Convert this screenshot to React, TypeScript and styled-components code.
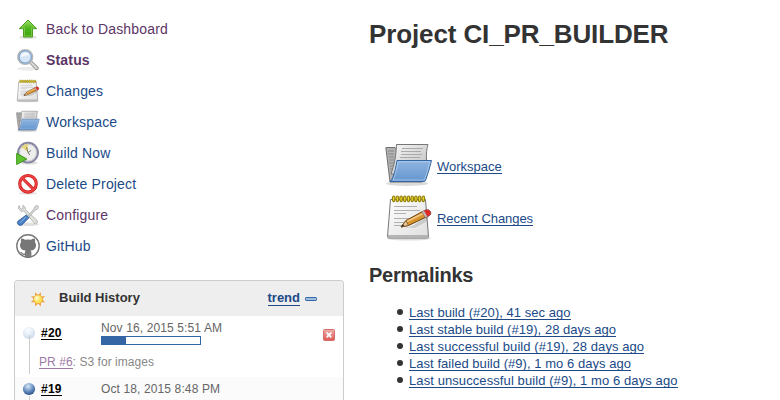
import React from 'react';
import styled, { createGlobalStyle } from 'styled-components';

const GlobalStyle = createGlobalStyle`
  * { box-sizing: border-box; }
  body {
    margin: 0;
    background: #fff;
    color: #333;
    font-family: "Liberation Sans", Arial, Helvetica, sans-serif;
    font-size: 13px;
    overflow: hidden;
  }
`;

const Page = styled.div`
  display: flex;
  width: 780px;
  height: 400px;
  overflow: hidden;
`;

const SidePanel = styled.aside`
  width: 344px;
  flex: none;
  padding: 13px 0 0 14px;
`;

const TaskList = styled.nav`
  display: flex;
  flex-direction: column;
  height: 267px;
`;

const Task = styled.a<{ $visited?: boolean; $current?: boolean }>`
  display: flex;
  align-items: center;
  gap: 6px;
  height: 31px;
  padding-left: 2px;
  font-size: 14px;
  white-space: nowrap;
  letter-spacing: 0.17px;
  font-weight: ${(p) => (p.$current ? 'bold' : 'normal')};
  color: ${(p) => (p.$visited ? '#5c3566' : '#204a87')};
  svg { flex: none; overflow: visible; }
`;

const History = styled.section`
  width: 330px;
  height: 140px;
  border: 1px solid #ccc;
  border-bottom: 0;
  border-radius: 4px 4px 0 0;
  overflow: hidden;
`;

const HistoryHeader = styled.header`
  display: flex;
  align-items: center;
  height: 35px;
  padding: 0 26px 0 15px;
  background: #eee;
  font-weight: bold;
  svg { display: block; flex: none; }
`;

const HistoryTitle = styled.span`
  flex: 1;
  margin: -2px 0 0 13px;
`;

const Trend = styled.a`
  color: #204a87;
  line-height: 14px;
  border-bottom: 1px solid #204a87;
  margin-right: 5px;
`;

const Build = styled.div<{ $shade?: boolean; $height: number }>`
  display: grid;
  grid-template-columns: 26px 60px 1fr 28px;
  grid-template-rows: 36px 1fr;
  height: ${(p) => p.$height}px;
  background: ${(p) => (p.$shade ? '#fbfbfb' : '#fff')};
  font-size: 12px;
  color: #666;
`;

const Timeline = styled.div`
  grid-row: 1 / 3;
  svg { display: block; }
`;

const BuildNumber = styled.a<{ $top: number }>`
  justify-self: start;
  align-self: start;
  margin-top: ${(p) => p.$top}px;
  height: 14px;
  line-height: 14px;
  font-weight: bold;
  letter-spacing: 0.25px;
  color: #000;
  border-bottom: 1px solid #000;
`;

const BuildDate = styled.div<{ $top: number }>`
  padding-top: ${(p) => p.$top}px;
  line-height: 14px;
  letter-spacing: 0.12px;
`;

const Progress = styled.div`
  width: 100px;
  height: 9px;
  margin-top: 1px;
  border: 1px solid #3465a4;
`;

const ProgressDone = styled.div`
  height: 100%;
  background: #3465a4;
`;

const StopButton = styled.a`
  padding-top: 13px;
  padding-left: 8px;
  svg { display: block; }
`;

const Description = styled.div`
  grid-column: 2 / 5;
  padding: 3px 0 0 0;
  margin-left: -2px;
  line-height: 14px;
  letter-spacing: 0.05px;
  color: #888;
`;

const PullLink = styled.a`
  display: inline-block;
  height: 14px;
  color: #9b7ba6;
  border-bottom: 1px solid #9b7ba6;
`;

const Main = styled.main`
  flex: 1;
  padding: 18px 0 0 25px;
  white-space: nowrap;
`;

const Title = styled.h1`
  margin: 0;
  height: 122px;
  font-size: 26px;
  line-height: 32px;
  letter-spacing: -0.12px;
`;

const Summary = styled.div`
  display: flex;
  align-items: center;
  height: 52px;
  padding-left: 16px;
  gap: 4px;
  svg { flex: none; }
`;

const Link = styled.a<{ $spacing?: number }>`
  display: inline-block;
  height: 15px;
  line-height: 15px;
  color: #204a87;
  border-bottom: 1px solid #204a87;
  letter-spacing: ${(p) => p.$spacing ?? 0}px;
`;

const SubTitle = styled.h2`
  margin: 19px 0 18px;
  font-size: 20px;
  line-height: 24px;
  letter-spacing: -0.25px;
`;

const Permalinks = styled.ul`
  margin: 0;
  padding: 0;
  list-style: none;
`;

const Permalink = styled.li`
  display: flex;
  align-items: flex-start;
  height: 17px;
  padding-left: 28px;
  &::before {
    content: '';
    width: 6px;
    height: 6px;
    margin: 4px 6px 0 0;
    border-radius: 50%;
    background: #333;
  }
`;

const UpIcon = () => (
  <svg width="24" height="24" viewBox="0 0 24 24">
    <defs>
      <linearGradient id="up" x2="0" y2="1"><stop stopColor="#97dc63" /><stop offset=".5" stopColor="#4db51b" /><stop offset="1" stopColor="#42a50f" /></linearGradient>
    </defs>
    <ellipse cx="12" cy="20.3" rx="9" ry="1.8" fill="#000" opacity=".12" />
    <path d="M12 3 20.6 11.7H16.5V20H7.5V11.7H3.4Z" fill="url(#up)" stroke="#4c9c1d" strokeLinejoin="round" />
    <path d="M12 4.5 18.5 10.9H15.5V19H8.5V10.9H5.5Z" fill="none" stroke="#b7ec8b" strokeWidth=".6" opacity=".7" />
  </svg>
);

const SearchIcon = () => (
  <svg width="24" height="24" viewBox="0 0 24 24">
    <ellipse cx="12" cy="20.7" rx="11" ry="2" fill="#000" opacity=".08" />
    <path d="m15 14.5 5.7 5.7" stroke="#858783" strokeWidth="3.8" strokeLinecap="round" />
    <path d="m15 14.5 5.6 5.6" stroke="#d8dad6" strokeWidth="2.2" strokeLinecap="round" />
    <circle cx="9.2" cy="9" r="7.3" fill="#d5e5f6" stroke="#b4b6b6" strokeWidth="1.6" />
    <circle cx="9.2" cy="9" r="6.1" fill="none" stroke="#6a96cc" strokeWidth="1" />
    <path d="M4.6 9.5C5 3.5 12 3 13.8 7.4 10 7 8 8 4.6 9.5Z" fill="#fff" opacity=".75" />
  </svg>
);

const NotepadIcon = ({ size }: { size: number }) => (
  <svg width={size} height={size} viewBox="0 0 48 48">
    <defs>
      <linearGradient id="pad" x2="1" y2="1"><stop stopColor="#fff" /><stop offset="1" stopColor="#dedede" /></linearGradient>
    </defs>
    <ellipse cx="24" cy="44.3" rx="22" ry="2.3" fill="#000" opacity=".13" />
    <path d="M5.5 5.5H40.5L43.5 42.5Q43.5 44 42 44H4Q2.5 44 2.5 42.5Z" fill="url(#pad)" stroke="#777" />
    <path d="M3 41H43V43.5H3Z" fill="#b5b5b5" />
    {[12, 16, 19, 24, 28, 31].map((y, i) => (
      <path key={y} d={`M9 ${y}.5H${[32, 35, 21, 34, 28, 24][i]}`} stroke="#b0b0b0" />
    ))}
    {Array.from({ length: 9 }, (_, i) => (
      <ellipse key={i} cx={8.7 + i * 3.7} cy="4.8" rx="1.3" ry="2.8" fill="#eadb34" stroke="#958008" strokeWidth="1.2" />
    ))}
    <path d="M18 33.5Q30 34 39 22L45 20 41 28 30 34Z" fill="#000" opacity=".12" />
    <path d="m16 33 5-6.5L38.5 17l3.5 5.5-18.5 9Z" fill="#d9942e" stroke="#69410f" />
    <path d="m22 27.5 17-8.5" stroke="#f3c985" strokeWidth="1.5" />
    <path d="m16 33 5-6.5 2.5 5Z" fill="#e8c594" stroke="#765125" strokeWidth=".8" />
    <path d="m16 33 2.1-2.7 1 1.8Z" fill="#222" />
    <path d="m37 17.8 4-2q3-.9 4.5 1.8t-1.5 4.3l-3.5 1.6Z" fill="#df2b25" stroke="#8d4a42" strokeWidth=".8" />
    <path d="m37 17.8 2-1 3.3 5.7-1.8 1Z" fill="#bcbcbc" />
  </svg>
);

const FolderIcon = ({ size }: { size: number }) => (
  <svg width={size} height={size} viewBox="0 0 48 48">
    <defs>
      <linearGradient id="folder" x2="0" y2="1"><stop stopColor="#8eb5df" /><stop offset="1" stopColor="#6596cf" /></linearGradient>
      <linearGradient id="paper" x2="1" y2="1"><stop stopColor="#f8f8f8" /><stop offset="1" stopColor="#bcbcbc" /></linearGradient>
    </defs>
    <ellipse cx="22" cy="41.5" rx="21" ry="2.5" fill="#000" opacity=".14" />
    <path d="M1 7Q.3 5.5 1 5.5H10L12 8H38L37 40H5Z" fill="#b2b2b2" stroke="#707070" />
    <path d="M3 9H9M3 12H9M4 15H9M4 18H9M4 21H9M5 24H9M5 27H9" stroke="#888" />
    <path d="M11.5 2.5H43Q41 8 41.5 19L37 32H6Q11 19 11.5 2.5Z" fill="url(#paper)" stroke="#777" />
    <path d="M17 6.5H38M16 9.5H36M16 12.5H37M15 15.5H35" stroke="#aaa" />
    <path d="M12 18.5H46.5Q44 29 40.5 38.5Q40 39.5 39 39.5H5Q9 37 12 18.5Z" fill="url(#folder)" stroke="#3465a4" />
    <path d="M13 19.8H45Q42 31 39.5 38H8Q11 32 13 19.8Z" fill="none" stroke="#c3daf2" opacity=".6" />
  </svg>
);

const ClockIcon = () => (
  <svg width="24" height="24" viewBox="0 0 24 24">
    <ellipse cx="13" cy="22" rx="9" ry="1.6" fill="#000" opacity=".12" />
    <circle cx="12" cy="11.6" r="9.9" fill="#eeeeec" stroke="#8585a0" strokeWidth="2" />
    <circle cx="12" cy="11.6" r="8.5" fill="none" stroke="#c5c6ce" />
    <path d="M12 11 5.4 6.6Q7.5 3.2 12 3Z" fill="#e8d57f" />
    <path d="m10.5 6.3 1.6 5.4 3-2.4M12.3 12l1.5 2" fill="none" stroke="#6b6b62" strokeWidth=".9" />
    <path d="M.7 12.3 10.8 18 .7 23.5Z" fill="#5fc331" stroke="#3f9418" strokeLinejoin="round" />
  </svg>
);

const ForbiddenIcon = () => (
  <svg width="24" height="24" viewBox="0 0 24 24">
    <ellipse cx="12" cy="21.3" rx="9" ry="1.5" fill="#000" opacity=".12" />
    <circle cx="12" cy="11.8" r="8.3" fill="#fff" stroke="#d01818" strokeWidth="3.1" />
    <path d="m6.2 6 11.6 11.6" stroke="#d01818" strokeWidth="3.1" />
    <circle cx="12" cy="11.8" r="8.3" fill="none" stroke="#ed4545" strokeWidth="1.7" />
    <path d="m6 5.8 12 12" stroke="#ed4545" strokeWidth="1.7" />
  </svg>
);

const ToolsIcon = () => (
  <svg width="24" height="24" viewBox="0 0 24 24">
    <ellipse cx="12" cy="21.3" rx="11" ry="1.7" fill="#000" opacity=".12" />
    <path d="M3.2 2.5 2.3 5.2 5 8.4l3-.4L18 19.8q1.3 1.5 2.8.4t.3-2.8L9.4 6.5 9.3 4.4 6.8 2.2 7 5.5 5.4 6 3.8 4.8Z" fill="#dfe1dd" stroke="#a9aca8" strokeWidth=".8" />
    <path d="m11.5 13.5 5.8-6.8 1.8-3.3 2-1 1.4 1.2-.8 2.2-3.2 2-6 6.8Z" fill="#d8dad6" stroke="#a4a7a4" strokeWidth=".8" />
    <path d="m10.3 12 2.6 2.8-7 7.2q-2 1.1-3.7-.6t-.1-3.4Z" fill="#4b80c5" stroke="#2a5799" strokeWidth=".8" />
    <path d="m10 14-6 5.7" stroke="#91b7e2" />
  </svg>
);

const GitHubIcon = () => (
  <svg width="24" height="24" viewBox="0 0 24 24">
    <circle cx="12" cy="12" r="11.2" fill="#fff" stroke="#777" strokeWidth="1.4" />
    <path d="M5.2 4.6Q7 4.4 9 5.8 12 5.2 15 5.8 17 4.4 18.8 4.6 19.4 6.4 18.9 8.1 20.5 10 19.8 12.7 19 16.2 14.5 16.6 15.5 17.5 15.4 19V23Q12 24 8.8 23V20.9Q6 21.4 5.1 19.2L4 18Q5.7 17.5 6.7 19.2 7.4 20 8.8 19.5 8.8 17.5 9.7 16.6 5 16.2 4.2 12.7 3.5 10 5.1 8.1 4.6 6.4 5.2 4.6Z" fill="#777" />
    <path d="M10.5 18.5V22.6M13.6 18.5V22.6" stroke="#999" strokeWidth=".5" />
  </svg>
);

const SunIcon = () => (
  <svg width="16" height="16" viewBox="0 0 16 16">
    <defs><radialGradient id="sun" cx=".35" cy=".35"><stop stopColor="#fffdd0" /><stop offset="1" stopColor="#fce04d" /></radialGradient></defs>
    {[22.5, 67.5, 112.5, 157.5, 202.5, 247.5, 292.5, 337.5].map((a) => (
      <path key={a} d="M6.7 4 8 .6 9.3 4Z" fill="#ee9a3d" transform={`rotate(${a} 8 8.3)`} />
    ))}
    <circle cx="8" cy="8.3" r="4.5" fill="url(#sun)" stroke="#f2a440" strokeWidth=".9" />
  </svg>
);

const TrendIcon = () => (
  <svg width="12" height="4" viewBox="0 0 12 4">
    <rect x=".5" y=".5" width="11" height="3" rx=".7" fill="#9fbfe2" stroke="#3465a4" />
  </svg>
);

const Marker = ({ running, y, end }: { running?: boolean; y: number; end: number }) => (
  <svg width="26" height={end} viewBox={`0 0 26 ${end}`}>
    <defs>
      <radialGradient id={running ? 'ballA' : 'ballB'} cx=".42" cy=".28" r=".75">
        <stop stopColor={running ? '#fbfdff' : '#dce9f6'} />
        <stop offset=".5" stopColor={running ? '#e4edf6' : '#7399c7'} />
        <stop offset="1" stopColor={running ? '#c9d8e9' : '#204a87'} />
      </radialGradient>
    </defs>
    <circle cx="14" cy={y} r="6.1" fill={`url(#${running ? 'ballA' : 'ballB'})`} />
    <path d={`M14.5 ${running ? y + 2 : y + 7}V${end}`} stroke="#ccc" />
  </svg>
);

const StopIcon = () => (
  <svg width="12" height="12" viewBox="0 0 12 12">
    <defs><linearGradient id="stop" x2="0" y2="1"><stop stopColor="#eeb0ae" /><stop offset="1" stopColor="#dc5754" /></linearGradient></defs>
    <rect x=".5" y=".5" width="11" height="11" rx="1" fill="url(#stop)" stroke="#d76c69" />
    <path d="m3.7 3.7 4.6 4.6m0-4.6L3.7 8.3" stroke="#fff" strokeWidth="1.9" />
  </svg>
);

const tasks = [
  { label: 'Back to Dashboard', icon: <UpIcon />, visited: true },
  { label: 'Status', icon: <SearchIcon />, visited: true, current: true },
  { label: 'Changes', icon: <NotepadIcon size={24} /> },
  { label: 'Workspace', icon: <FolderIcon size={24} /> },
  { label: 'Build Now', icon: <ClockIcon /> },
  { label: 'Delete Project', icon: <ForbiddenIcon /> },
  { label: 'Configure', icon: <ToolsIcon />, visited: true },
  { label: 'GitHub', icon: <GitHubIcon /> },
];

const permalinks = [
  { label: 'Last build (#20), 41 sec ago', spacing: 0.04 },
  { label: 'Last stable build (#19), 28 days ago', spacing: 0.03 },
  { label: 'Last successful build (#19), 28 days ago', spacing: 0.08 },
  { label: 'Last failed build (#9), 1 mo 6 days ago', spacing: 0.04 },
  { label: 'Last unsuccessful build (#9), 1 mo 6 days ago', spacing: 0.09 },
];

export default function App() {
  return (
    <Page>
      <GlobalStyle />
      <SidePanel>
        <TaskList>
          {tasks.map((t) => (
            <Task key={t.label} $visited={t.visited} $current={t.current}>
              {t.icon}
              <span>{t.label}</span>
            </Task>
          ))}
        </TaskList>
        <History>
          <HistoryHeader>
            <SunIcon />
            <HistoryTitle>Build History</HistoryTitle>
            <Trend>trend</Trend>
            <TrendIcon />
          </HistoryHeader>
          <Build $height={61}>
            <Timeline><Marker running y={17} end={58} /></Timeline>
            <BuildNumber $top={10}>#20</BuildNumber>
            <BuildDate $top={5}>
              Nov 16, 2015 5:51 AM
              <Progress><ProgressDone style={{ width: '24%' }} /></Progress>
            </BuildDate>
            <StopButton><StopIcon /></StopButton>
            <Description><PullLink>PR #6</PullLink>: S3 for images</Description>
          </Build>
          <Build $shade $height={43}>
            <Timeline><Marker y={12} end={43} /></Timeline>
            <BuildNumber $top={5}>#19</BuildNumber>
            <BuildDate $top={5}>Oct 18, 2015 8:48 PM</BuildDate>
          </Build>
        </History>
      </SidePanel>
      <Main>
        <Title>Project CI_PR_BUILDER</Title>
        <Summary><FolderIcon size={48} /><Link>Workspace</Link></Summary>
        <Summary><NotepadIcon size={48} /><Link $spacing={-0.06}>Recent Changes</Link></Summary>
        <SubTitle>Permalinks</SubTitle>
        <Permalinks>
          {permalinks.map((p) => (
            <Permalink key={p.label}><Link $spacing={p.spacing}>{p.label}</Link></Permalink>
          ))}
        </Permalinks>
      </Main>
    </Page>
  );
}
